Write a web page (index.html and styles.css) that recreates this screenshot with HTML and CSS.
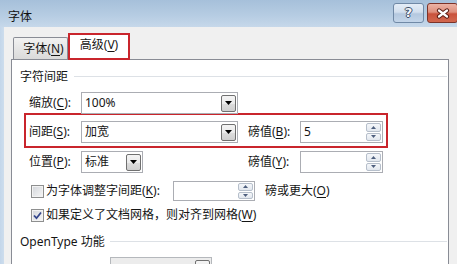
FILE: index.html
```html
<!DOCTYPE html>
<html lang="zh-CN">
<head>
<meta charset="utf-8">
<title>字体</title>
<link rel="stylesheet" href="styles.css">
</head>
<body>
<div class="window">
  <div class="titlebar">
    <div class="title">字体</div>
    <div class="caption-buttons">
      <div class="cap-btn help"><span class="q">?</span></div>
      <div class="cap-btn close">
        <svg width="14" height="11" viewBox="0 0 14 11"><path d="M3 2.5L11 8.5M11 2.5L3 8.5" stroke="#5a1c14" stroke-width="4.2" stroke-linecap="round"/><path d="M3 2.5L11 8.5M11 2.5L3 8.5" stroke="#ffffff" stroke-width="2.2" stroke-linecap="round"/></svg>
      </div>
    </div>
  </div>
  <div class="main">
    <div class="frame-left"></div>
    <div class="content">
      <div class="tabs">
        <div class="tab">字体(<u>N</u>)</div>
        <div class="tab active">高级(<u>V</u>)</div>
      </div>
      <div class="panel">
        <div class="group-header"><span>字符间距</span><i class="rule"></i></div>

        <div class="row r-scale">
          <span class="label">缩放(<u>C</u>):</span>
          <div class="combo w-wide"><span class="val">100%</span><span class="drop"><svg width="7" height="4" viewBox="0 0 7 4"><path d="M0 0H7L3.5 4Z" fill="#000"/></svg></span></div>
        </div>

        <div class="row highlight">
          <span class="label">间距(<u>S</u>):</span>
          <div class="cell"><div class="combo w-wide"><span class="val">加宽</span><span class="drop"><svg width="7" height="4" viewBox="0 0 7 4"><path d="M0 0H7L3.5 4Z" fill="#000"/></svg></span></div></div>
          <span class="label">磅值(<u>B</u>):</span>
          <div class="spin w-spin"><span class="val">5</span><span class="spinner"><i><svg width="5" height="3" viewBox="0 0 5 3"><path d="M0 3H5L2.5 0Z" fill="#4e5f7e"/></svg></i><i><svg width="5" height="3" viewBox="0 0 5 3"><path d="M0 0H5L2.5 3Z" fill="#4e5f7e"/></svg></i></span></div>
        </div>

        <div class="row r-pos">
          <span class="label">位置(<u>P</u>):</span>
          <div class="cell"><div class="combo w-narrow"><span class="val">标准</span><span class="drop"><svg width="7" height="4" viewBox="0 0 7 4"><path d="M0 0H7L3.5 4Z" fill="#000"/></svg></span></div></div>
          <span class="label">磅值(<u>Y</u>):</span>
          <div class="spin w-spin"><span class="val"></span><span class="spinner"><i><svg width="5" height="3" viewBox="0 0 5 3"><path d="M0 3H5L2.5 0Z" fill="#4e5f7e"/></svg></i><i><svg width="5" height="3" viewBox="0 0 5 3"><path d="M0 0H5L2.5 3Z" fill="#4e5f7e"/></svg></i></span></div>
        </div>

        <div class="row r-kern">
          <span class="checkbox"></span>
          <span class="cb-label">为字体调整字间距(<u>K</u>):</span>
          <div class="spin w-small"><span class="val"></span><span class="spinner"><i><svg width="5" height="3" viewBox="0 0 5 3"><path d="M0 3H5L2.5 0Z" fill="#4e5f7e"/></svg></i><i><svg width="5" height="3" viewBox="0 0 5 3"><path d="M0 0H5L2.5 3Z" fill="#4e5f7e"/></svg></i></span></div>
          <span class="after">磅或更大(<u>O</u>)</span>
        </div>

        <div class="row r-grid">
          <span class="checkbox checked"><svg width="11" height="11" viewBox="0 0 11 11"><path d="M2 5.5L4.5 8.2L9 2.5" fill="none" stroke="#34468c" stroke-width="1.8"/></svg></span>
          <span>如果定义了文档网格，则对齐到网格(<u>W</u>)</span>
        </div>

        <div class="group-header g-open"><span>OpenType 功能</span><i class="rule"></i></div>

        <div class="row r-bottom">
          <div class="combo w-bottom disabled"><span class="val"></span><span class="drop"><svg width="7" height="4" viewBox="0 0 7 4"><path d="M0 0H7L3.5 4Z" fill="#000"/></svg></span></div>
        </div>
      </div>
    </div>
  </div>
</div>
</body>
</html>
```

FILE: styles.css
```css
* { box-sizing: border-box; }
html, body { margin: 0; padding: 0; }
body {
  width: 457px;
  height: 264px;
  overflow: hidden;
  background: #f0f0f0;
  font-family: "Noto Sans", "Noto Sans CJK SC", sans-serif;
  font-size: 12px;
  line-height: 16px;
  color: #151515;
}
u { text-decoration: underline; text-underline-offset: 2px; text-decoration-thickness: 1px; }

.window { display: flex; flex-direction: column; height: 264px; overflow: hidden; }

.titlebar {
  height: 27px;
  flex: none;
  display: flex;
  justify-content: space-between;
  align-items: flex-start;
  background: linear-gradient(#a6c0da, #b7cde3 60%, #c6d8ea);
}
.title { padding-left: 8px; margin-top: 9px; color: #111; }
.caption-buttons { display: flex; gap: 3px; margin-top: 3px; margin-right: -1px; }
.cap-btn {
  height: 20px;
  border-radius: 3px;
  display: flex;
  align-items: center;
  justify-content: center;
}
.help {
  width: 31px;
  border: 1px solid #7089a6;
  background: linear-gradient(#e4edf7 0%, #d2dfee 45%, #b4c8df 55%, #c3d5e9 100%);
}
.help .q {
  font-family: "DejaVu Sans", sans-serif;
  font-weight: bold;
  font-size: 13px;
  line-height: 14px;
  color: #f4f6fa;
  text-shadow: 1px 0 #3c4d68, -1px 0 #3c4d68, 0 1px #3c4d68, 0 -1px #3c4d68;
}
.close {
  width: 31px;
  border: 1px solid #7c3329;
  background: linear-gradient(#ebb3a5 0%, #de8f7d 45%, #c9523c 55%, #d2684f 100%);
}

.main { flex: 1; display: flex; min-height: 0; overflow: hidden; }
.frame-left { width: 4px; flex: none; background: linear-gradient(90deg, #c3d6ea, #cddded); }
.content { flex: 1; display: flex; flex-direction: column; padding-top: 6px; min-width: 0; min-height: 0; overflow: hidden; }

.tabs { display: flex; align-items: flex-end; margin-left: 9px; height: 26px; flex: none; }
.tab {
  height: 22px;
  padding: 0 0 0 6px;
  width: 55px;
  border: 1px solid #898c95;
  border-bottom: none;
  border-radius: 2px 2px 0 0;
  background: linear-gradient(#f2f2f2, #e6e6e6 50%, #dadada);
  display: flex;
  align-items: center;
  justify-content: center;
  white-space: nowrap;
}
.tab.active {
  position: relative;
  width: 62px;
  height: 27px;
  margin-bottom: -1px;
  border: 2px solid #c9252c;
  border-radius: 0;
  background: #fff;
  padding: 0 0 4px 0;
}

.panel {
  flex: 1;
  min-height: 0;
  overflow: hidden;
  margin-left: 7px;
  width: 438px;
  background: #fff;
  border: 1px solid #898c95;
  border-bottom: none;
  padding-top: 9px;
}

.group-header {
  display: flex;
  align-items: center;
  height: 16px;
  padding-left: 8px;
  padding-right: 1px;
  white-space: nowrap;
}
.rule { flex: 1; height: 1px; background: #dde1e6; margin-left: 6px; margin-top: -1px; }
.g-open { margin-top: 11px; }
.g-open .rule { margin-left: 5px; }

.row { display: flex; align-items: center; white-space: nowrap; }
.label { width: 52px; flex: none; }
.cell { width: 157px; flex: none; margin-right: 10px; }

.r-scale { margin-top: 7px; padding-left: 17px; height: 22px; }
.highlight {
  margin-top: -1px;
  margin-left: 12px;
  width: 364px;
  height: 35px;
  border: 2px solid #c9252c;
  padding: 6px 3px 3px 3px;
}
.r-pos { margin-top: 3px; padding-left: 17px; height: 22px; }
.r-kern { margin-top: 8px; padding-left: 19px; height: 20px; }
.r-grid { margin-top: 6px; padding-left: 19px; height: 16px; }
.r-bottom { margin-top: 7px; padding-left: 98px; }

.combo {
  height: 22px;
  border: 1px solid #abadb3;
  background: #fff;
  display: flex;
  align-items: center;
}
.combo .val { flex: 1; padding-left: 3px; }
.w-wide { width: 157px; }
.w-narrow { width: 62px; }
.w-bottom { width: 102px; }
.combo.disabled { background: #ececec; border-color: #b5b8bc; }

.drop {
  width: 15px;
  height: 17px;
  margin-right: 1px;
  flex: none;
  border: 1px solid #707070;
  border-radius: 2px;
  background: linear-gradient(#f4f4f4, #ebebeb 50%, #dddddd 50%, #cfcfcf);
  display: flex;
  align-items: center;
  justify-content: center;
}
.drop svg { display: block; }

.spin {
  height: 22px;
  border: 1px solid #abadb3;
  background: #fff;
  display: flex;
  align-items: center;
  flex: none;
}
.spin .val { flex: 1; padding-left: 3px; }
.w-spin { width: 83px; }
.w-small { width: 82px; height: 20px; }
.spinner {
  width: 15px;
  height: 100%;
  margin-right: 1px;
  padding: 1px 0;
  display: flex;
  flex-direction: column;
  gap: 1px;
  flex: none;
}
.spinner i {
  flex: 1;
  border: 1px solid #b6bfcb;
  border-radius: 2px;
  background: linear-gradient(#f5f7fa, #e2e7ee);
  display: flex;
  align-items: center;
  justify-content: center;
}
.spinner svg { display: block; }

.checkbox {
  width: 13px;
  height: 13px;
  flex: none;
  margin-right: 2px;
  border: 1px solid #8e8f8f;
  background: linear-gradient(135deg, #d2d5da, #f7f7f7);
  box-shadow: inset 0 0 0 1px #f3f3f3;
  display: flex;
  align-items: center;
  justify-content: center;
}
.checkbox svg { display: block; }
.cb-label { width: 127px; flex: none; }
.after { margin-left: 10px; }
```
